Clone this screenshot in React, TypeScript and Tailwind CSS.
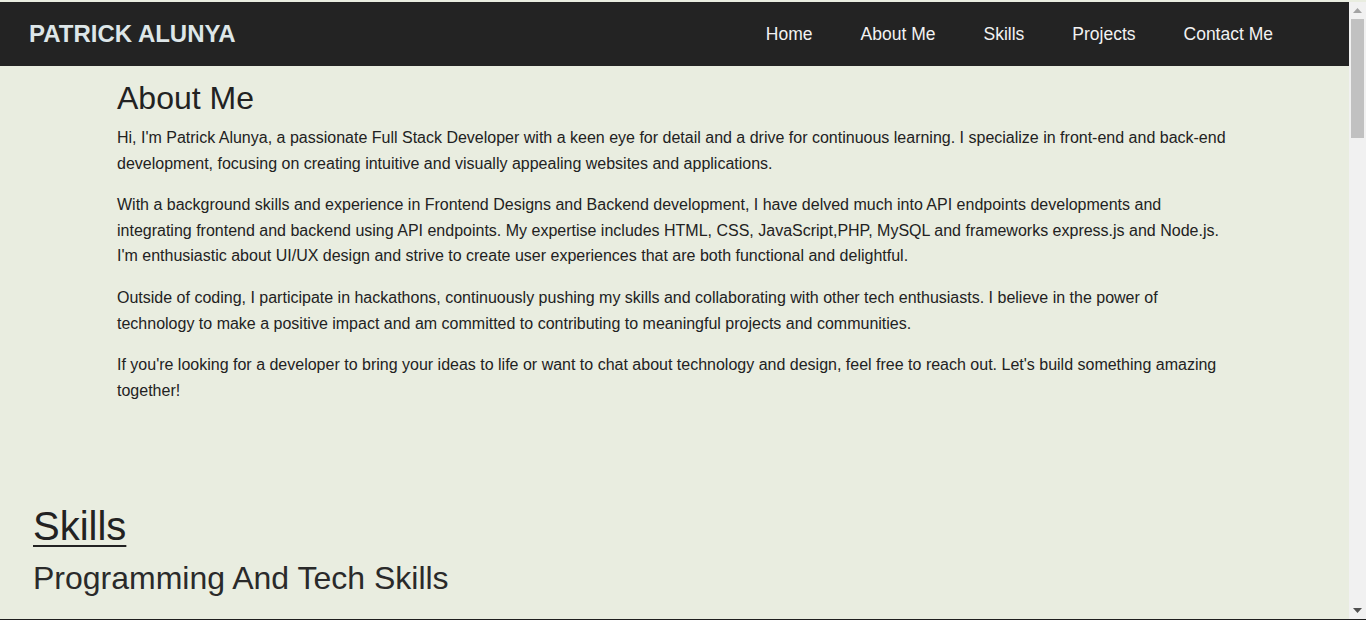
import React from "react"

const navLinks = ["Home", "About Me", "Skills", "Projects", "Contact Me"]

const paragraphs = [
	"Hi, I'm Patrick Alunya, a passionate Full Stack Developer with a keen eye for detail and a drive for continuous learning. I specialize in front-end and back-end development, focusing on creating intuitive and visually appealing websites and applications.",
	"With a background skills and experience in Frontend Designs and Backend development, I have delved much into API endpoints developments and integrating frontend and backend using API endpoints. My expertise includes HTML, CSS, JavaScript,PHP, MySQL and frameworks express.js and Node.js. I'm enthusiastic about UI/UX design and strive to create user experiences that are both functional and delightful.",
	"Outside of coding, I participate in hackathons, continuously pushing my skills and collaborating with other tech enthusiasts. I believe in the power of technology to make a positive impact and am committed to contributing to meaningful projects and communities.",
	"If you're looking for a developer to bring your ideas to life or want to chat about technology and design, feel free to reach out. Let's build something amazing together!",
]

// fake window scrollbar (headless browser draws none)
function Scrollbar() {
	return (
		<div className="w-[17px] shrink-0 bg-[#f1f1f1] flex flex-col items-center">
			<div className="h-[17px] flex items-center justify-center">
				<svg width="9" height="5" viewBox="0 0 9 5">
					<path d="M0 5 L4.5 0 L9 5 Z" fill="#a3a3a3" />
				</svg>
			</div>
			<div className="w-[13px] h-[119px] bg-[#c1c1c1]"></div>
			<div className="flex-1"></div>
			<div className="h-[17px] flex items-center justify-center">
				<svg width="9" height="5" viewBox="0 0 9 5">
					<path d="M0 0 L9 0 L4.5 5 Z" fill="#505050" />
				</svg>
			</div>
		</div>
	)
}

function App() {
	return (
		<div className="h-[620px] bg-[#e9ede0] pt-[2px] border-b border-[#1e1e1e] font-['Liberation_Sans',Arial,sans-serif]">
			<div className="h-[617px] flex">
				<div className="flex-1 overflow-hidden">
					{/* Header */}
					<header className="h-16 bg-[#232323] flex items-center justify-between pl-[29px] pr-[76px]">
						<h1 className="text-[24px] font-bold text-[#dde6e8]">PATRICK ALUNYA</h1>
						<nav className="flex gap-12">
							{navLinks.map((link) => (
								<a key={link} href="#" className="text-[17.5px] text-[#f2f2f2]">
									{link}
								</a>
							))}
						</nav>
					</header>

					{/* About */}
					<section className="px-[117px] pt-[14px] text-[#222222]">
						<h2 className="text-[32px] leading-[37px] mb-[8px]">About Me</h2>
						{paragraphs.map((p, i) => (
							<p key={i} className="text-[16px] leading-[1.6] mb-4">
								{p}
							</p>
						))}
					</section>

					{/* Skills */}
					<section className="px-[33px] pt-[84px] text-[#222222]">
						<h2 className="text-[40px] leading-[46px] underline underline-offset-[5px] decoration-2">Skills</h2>
						<h3 className="text-[32px] leading-[37px] text-[#2a2a2a] mt-[11px]">Programming And Tech Skills</h3>
					</section>
				</div>
				<Scrollbar />
			</div>
		</div>
	)
}

export default App
